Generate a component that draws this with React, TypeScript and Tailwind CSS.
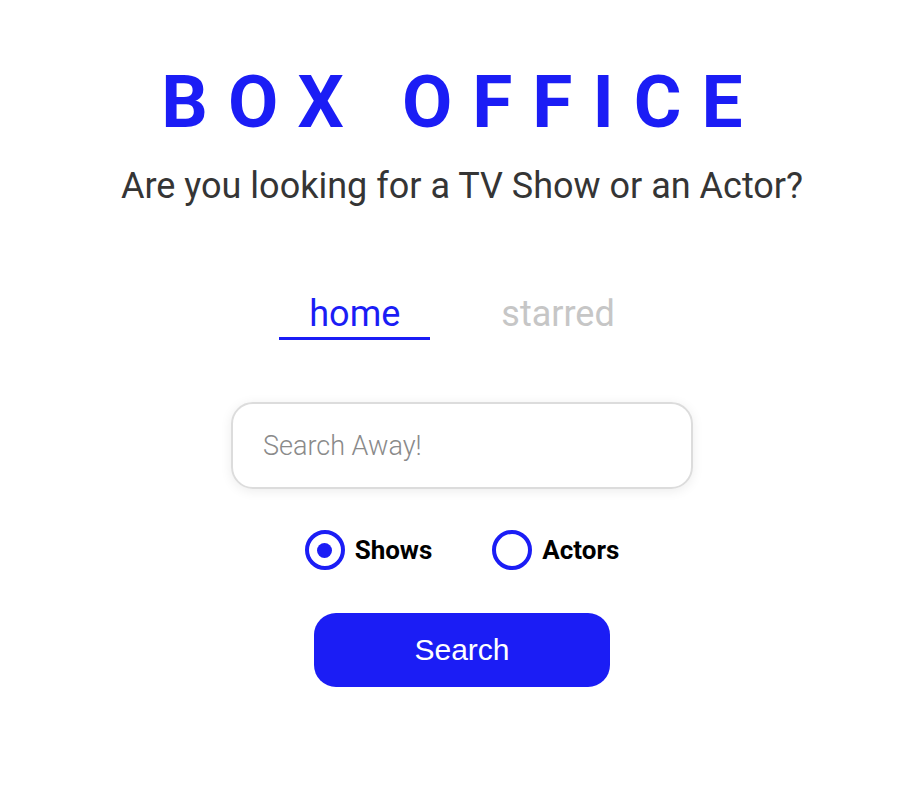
import React, { useState } from 'react';

const App: React.FC = () => {
  const [type, setType] = useState<'shows' | 'actors'>('shows');

  return (
    <div className="min-h-screen bg-white pl-[18px] flex flex-col items-center font-['Roboto',sans-serif]">
      {/* header */}
      <h1 className="mt-[62px] text-[73px] font-bold tracking-[20px] leading-[80px] text-[#1b1df5] uppercase">
        Box Office
      </h1>
      <p className="mt-[24px] text-[36px] leading-[40px] text-[#353535]">
        Are you looking for a TV Show or an Actor?
      </p>

      {/* nav */}
      <nav className="mt-[88px] flex gap-[41px]">
        <a className="px-[30px] pb-[3px] border-b-[3px] border-[#1b1df5] text-[36px] leading-[40px] text-[#1b1df5]">
          home
        </a>
        <a className="px-[30px] pb-[3px] border-b-[3px] border-transparent text-[36px] leading-[40px] text-[#c6c6c6]">
          starred
        </a>
      </nav>

      {/* search */}
      <input
        type="text"
        placeholder="Search Away!"
        className="mt-[62px] w-[462px] h-[87px] rounded-[22px] border-2 border-[#dcdcdc] pl-[30px] text-[27px] font-light text-[#353535] placeholder:text-[#8a8a8a] shadow-[0_2px_12px_rgba(0,0,0,0.08)] outline-none"
      />

      <div className="mt-[41px] flex gap-[60px]">
        <label className="flex items-center gap-[10px] cursor-pointer" onClick={() => setType('shows')}>
          <span className="w-[40px] h-[40px] rounded-full border-4 border-[#1b1df5] flex items-center justify-center">
            {type === 'shows' && <span className="w-[15px] h-[15px] rounded-full bg-[#1b1df5]" />}
          </span>
          <span className="text-[26px] font-bold text-black">Shows</span>
        </label>
        <label className="flex items-center gap-[10px] cursor-pointer" onClick={() => setType('actors')}>
          <span className="w-[40px] h-[40px] rounded-full border-4 border-[#1b1df5] flex items-center justify-center">
            {type === 'actors' && <span className="w-[15px] h-[15px] rounded-full bg-[#1b1df5]" />}
          </span>
          <span className="text-[26px] font-bold text-black">Actors</span>
        </label>
      </div>

      <button className="mt-[43px] w-[296px] h-[74px] rounded-[22px] bg-[#1b1df5] text-white text-[30px] pb-[2px] font-['Liberation_Sans',Arial,sans-serif]">
        Search
      </button>
    </div>
  );
};

export default App;
